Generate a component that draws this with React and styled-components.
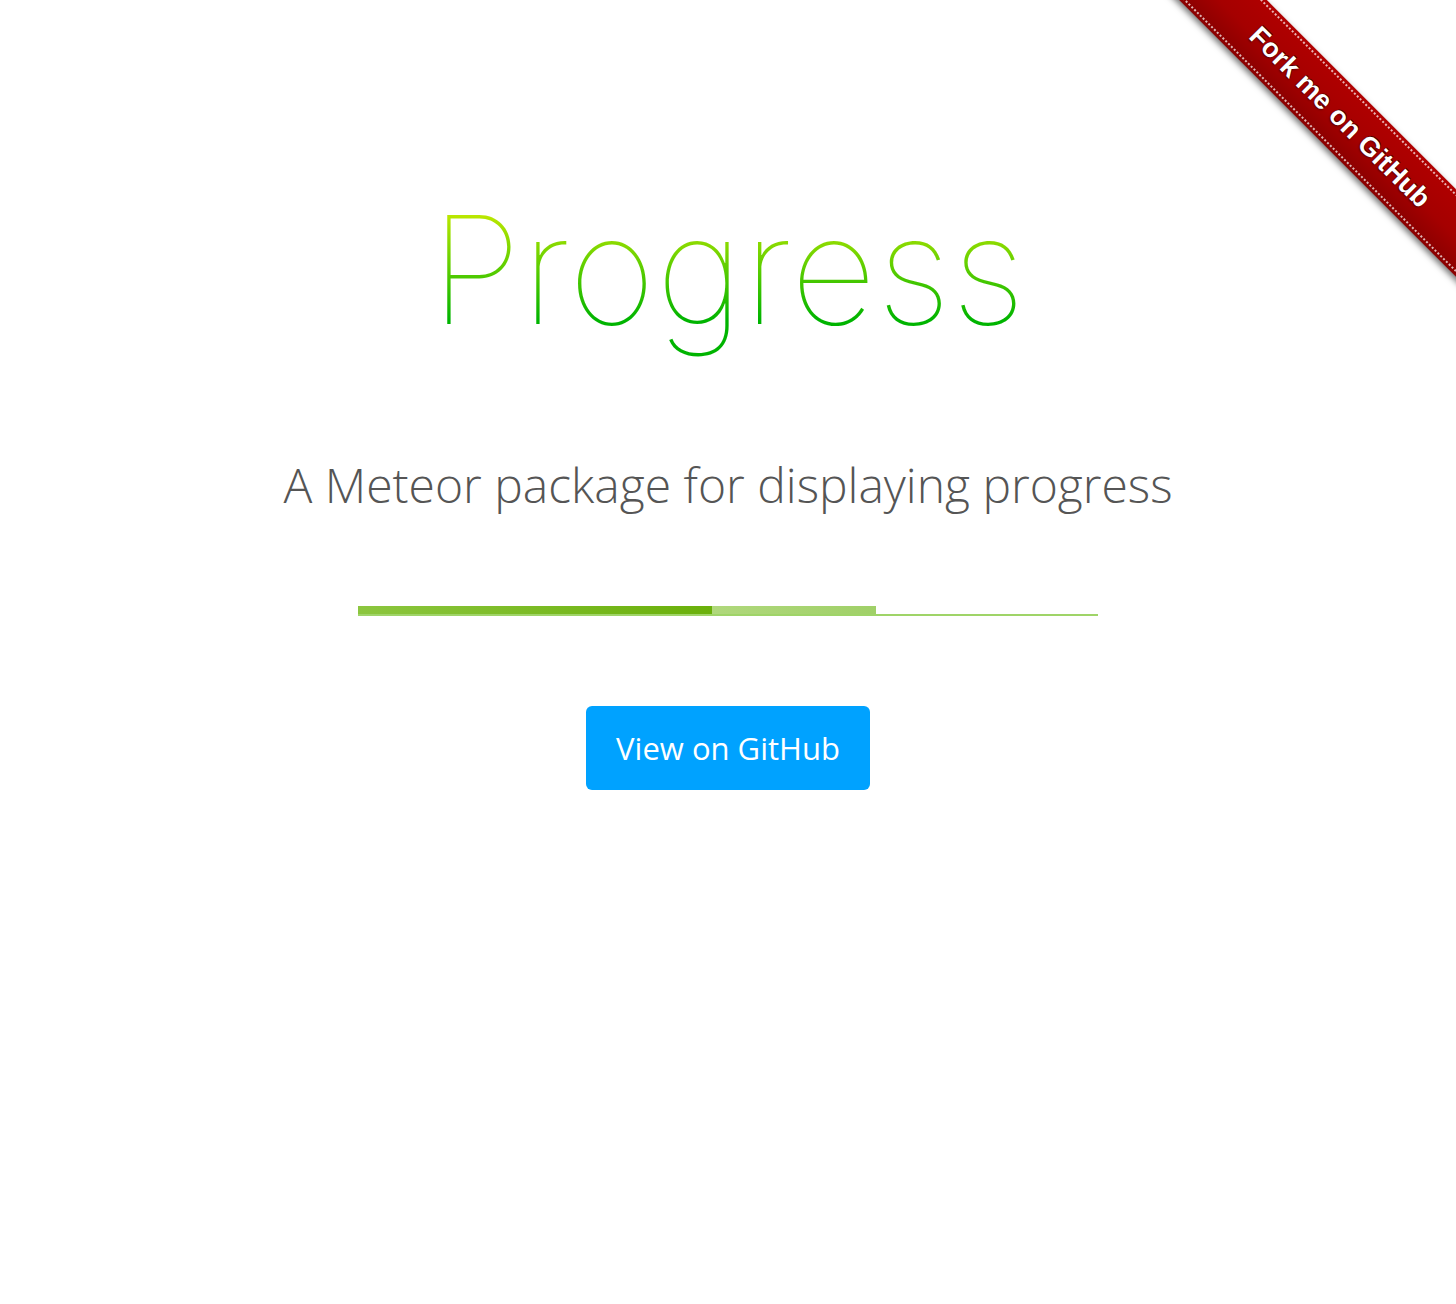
import React from "react";
import styled, { createGlobalStyle } from "styled-components";

const Global = createGlobalStyle`
  html, body { margin: 0; padding: 0; background: #fff; }
  body { font-family: "Open Sans", "Liberation Sans", sans-serif; }
`;

const Page = styled.main`
  position: relative;
  min-height: 1304px;
  display: flex;
  flex-direction: column;
  align-items: center;
  overflow: hidden;
`;

const Title = styled.h1`
  margin: 170px 0 0;
  font-family: Inter, Lato, sans-serif;
  font-weight: 100;
  font-size: 150px;
  line-height: 200px;
  letter-spacing: 0.5px;
  background: linear-gradient(180deg, #c4ea00 20%, #00b400 75%);
  -webkit-background-clip: text;
  background-clip: text;
  color: transparent;
`;

const Subtitle = styled.h2`
  margin: 85px 0 0;
  font-family: "Open Sans", sans-serif;
  font-weight: 300;
  font-size: 48px;
  line-height: 60px;
  color: #555;
`;

const Track = styled.div`
  margin-top: 91px;
  width: 740px;
  height: 10px;
  display: flex;
  align-items: flex-start;
  border-bottom: 2px solid #9fd468;
  box-sizing: border-box;
`;

const Segment = styled.div`
  height: 8px;
  flex: 0 0 ${(p) => p.$w}px;
  background: ${(p) => p.$bg};
`;

const Button = styled.a`
  margin-top: 90px;
  width: 284px;
  height: 84px;
  display: flex;
  align-items: center;
  justify-content: center;
  background: #00a2ff;
  border-radius: 6px;
  color: #fff;
  font-family: "Open Sans", sans-serif;
  font-size: 31px;
  font-weight: 400;
  text-decoration: none;
`;

const RibbonBox = styled.div`
  position: absolute;
  top: 0;
  right: 0;
  width: 300px;
  height: 300px;
  overflow: hidden;
`;

const Ribbon = styled.a`
  position: absolute;
  left: -66px;
  top: 86px;
  width: 500px;
  height: 62px;
  transform: rotate(45deg);
  background: linear-gradient(180deg, #b00000 0%, #a50000 55%, #8a0000 100%);
  box-shadow: 0 3px 6px rgba(0, 0, 0, 0.55);
  display: flex;
  align-items: center;
  justify-content: center;
  text-decoration: none;
  color: #fff;
  font-family: "Liberation Sans", Arial, sans-serif;
  font-weight: 700;
  font-size: 27px;
  text-shadow: 0 -1px 0 rgba(0, 0, 0, 0.6), 0 1px 2px rgba(0, 0, 0, 0.5);
  &::before,
  &::after {
    content: "";
    position: absolute;
    left: 0;
    right: 0;
    border-top: 2px dotted rgba(255, 255, 255, 0.7);
  }
  &::before { top: 3px; }
  &::after { bottom: 3px; }
`;

export default function App() {
  return (
    <Page>
      <Global />
      <Title>Progress</Title>
      <Subtitle>A Meteor package for displaying progress</Subtitle>
      <Track>
        <Segment $w={354} $bg="linear-gradient(90deg, #8cc63f, #6ab00a)" />
        <Segment $w={164} $bg="linear-gradient(90deg, #b0d87c, #a0d068)" />
      </Track>
      <Button href="#">View on GitHub</Button>
      <RibbonBox>
        <Ribbon href="#">Fork me on GitHub</Ribbon>
      </RibbonBox>
    </Page>
  );
}
